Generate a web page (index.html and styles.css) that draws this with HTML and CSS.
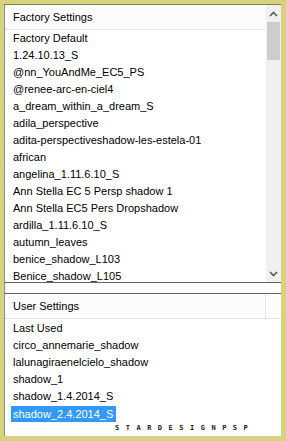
FILE: index.html
```html
<!DOCTYPE html>
<html>
<head>
<meta charset="utf-8">
<link rel="stylesheet" href="styles.css">
</head>
<body>
<div class="frame">
  <div class="inner">
    <div class="panel top">
      <div class="listwrap">
        <div class="header">Factory Settings</div>
        <div class="items">
          <div class="row">Factory Default</div>
          <div class="row">1.24.10.13_S</div>
          <div class="row">@nn_YouAndMe_EC5_PS</div>
          <div class="row">@renee-arc-en-ciel4</div>
          <div class="row">a_dream_within_a_dream_S</div>
          <div class="row">adila_perspective</div>
          <div class="row">adita-perspectiveshadow-les-estela-01</div>
          <div class="row">african</div>
          <div class="row">angelina_1.11.6.10_S</div>
          <div class="row">Ann Stella EC 5 Persp shadow 1</div>
          <div class="row">Ann Stella EC5 Pers Dropshadow</div>
          <div class="row">ardilla_1.11.6.10_S</div>
          <div class="row">autumn_leaves</div>
          <div class="row">benice_shadow_L103</div>
          <div class="row">Benice_shadow_L105</div>
        </div>
      </div>
      <div class="scrollbar">
        <div class="sbtn"><svg width="9" height="6" viewBox="0 0 9 6"><polyline points="1,5 4.5,1.5 8,5" fill="none" stroke="#5a5a5a" stroke-width="1.6"/></svg></div>
        <div class="track"><div class="thumb"></div></div>
        <div class="sbtn"><svg width="9" height="6" viewBox="0 0 9 6"><polyline points="1,1 4.5,4.5 8,1" fill="none" stroke="#5a5a5a" stroke-width="1.6"/></svg></div>
      </div>
    </div>
    <div class="gap"></div>
    <div class="panel bottom">
      <div class="header split"><span class="htext">User Settings</span><span class="hrest"></span></div>
      <div class="items user">
        <div class="row">Last Used</div>
        <div class="row">circo_annemarie_shadow</div>
        <div class="row">lalunagiraenelcielo_shadow</div>
        <div class="row">shadow_1</div>
        <div class="row">shadow_1.4.2014_S</div>
        <div class="row"><span class="sel">shadow_2.4.2014_S</span></div>
      </div>
      <div class="watermark">STARDESIGNPSP</div>
    </div>
  </div>
</div>
</body>
</html>
```
FILE: styles.css
```css
* { box-sizing: border-box; }
html, body { margin: 0; padding: 0; }
body {
  width: 286px;
  height: 441px;
  background: #d7d27e;
  font-family: "Liberation Sans", Arial, sans-serif;
  font-size: 11px;
  color: #000;
  overflow: hidden;
}
.frame {
  padding: 4px 5px 5px 4px;
  height: 441px;
}
.inner {
  height: 432px;
  background: #fff;
  border-top: 1px solid #858046;
  border-left: 1px solid #8e8e8e;
  display: flex;
  flex-direction: column;
}
.panel { position: relative; }
.panel.top {
  height: 278px;
  border-bottom: 1px solid #646464;
  display: flex;
  overflow: hidden;
}
.listwrap {
  flex: 1;
  min-width: 0;
  overflow: hidden;
}
.header {
  height: 25px;
  background: #fcfcfc;
  border-bottom: 1px solid #e3e3e3;
  padding-left: 8px;
  line-height: 25px;
  white-space: nowrap;
}
.header.split {
  display: flex;
  padding-left: 0;
}
.htext {
  width: 261px;
  padding-left: 8px;
  border-right: 1px solid #e6e6e6;
}
.hrest { flex: 1; }
.items { white-space: nowrap; }
.row {
  height: 17px;
  line-height: 17px;
  padding-left: 8px;
}
.items.user { padding-top: 1px; }
.scrollbar {
  width: 15px;
  background: #f0f0f0;
  display: flex;
  flex-direction: column;
}
.sbtn {
  height: 17px;
  display: flex;
  align-items: center;
  justify-content: center;
  background: #f0f0f0;
}
.track { flex: 1; }
.thumb {
  height: 38px;
  background: #cdcdcd;
  margin: 0 1px;
}
.gap { height: 10px; }
.panel.bottom {
  flex: 1;
  border-top: 1px solid #646464;
}
.sel {
  display: inline-block;
  background: #3399ff;
  color: #fff;
  margin-left: -2px;
  padding: 0 3px 0 2px;
  line-height: 16px;
  height: 16px;
  margin-top: 1px;
  vertical-align: top;
}
.watermark {
  position: absolute;
  left: 110px;
  top: 130px;
  font-family: "DejaVu Sans Mono", monospace;
  font-size: 7px;
  font-weight: bold;
  letter-spacing: 6.5px;
  color: #1a1a1a;
  line-height: 8px;
}
```
